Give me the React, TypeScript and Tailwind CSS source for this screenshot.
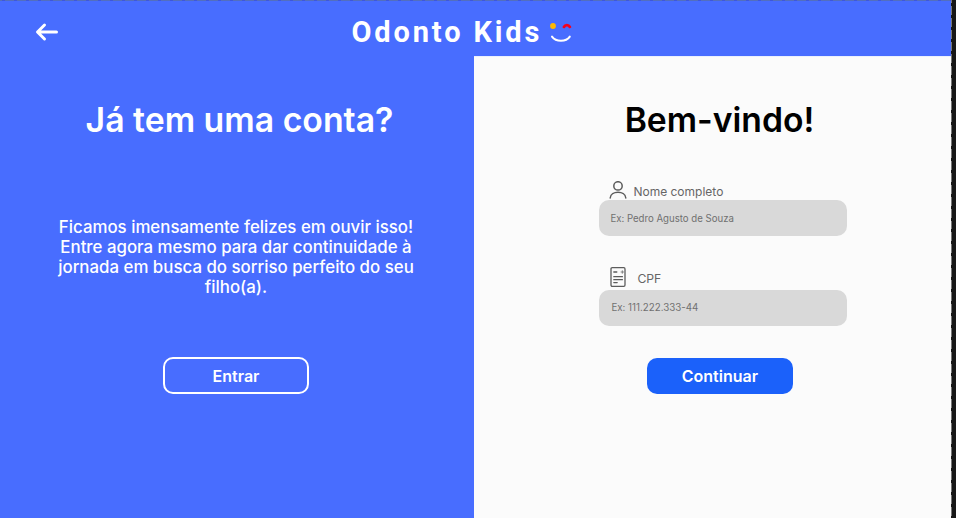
import React from "react";

function BackArrow() {
  return (
    <svg width="24" height="20" viewBox="0 0 24 20" fill="none" stroke="white" strokeWidth="3" strokeLinecap="round" strokeLinejoin="round">
      <path d="M21.5 10H3M9.5 3L2.5 10l7 7" />
    </svg>
  );
}

function WinkLogo() {
  return (
    <svg width="24" height="22" viewBox="0 0 24 22" fill="none">
      <circle cx="4" cy="4" r="2.9" fill="#FFB800" />
      <path d="M15 4.8C16.2 2.5 19.6 2.5 20.8 4.8" stroke="#F5001D" strokeWidth="2.9" strokeLinecap="round" />
      <path d="M3 14.6C7 20.2 17 20.2 20.8 14.6" stroke="white" strokeWidth="2" strokeLinecap="round" />
    </svg>
  );
}

function PersonIcon() {
  return (
    <svg className="mb-px" width="18" height="18" viewBox="0 0 18 18" fill="none" stroke="#5c5c5c" strokeWidth="1.5" strokeLinecap="round">
      <circle cx="9" cy="4.9" r="4.2" />
      <path d="M1.2 17C1.8 9.3 16.2 9.3 16.8 17" />
    </svg>
  );
}

function DocumentIcon() {
  return (
    <svg width="18" height="22" viewBox="0 0 18 22" fill="none" stroke="#5c5c5c" strokeWidth="1.3" strokeLinecap="round">
      <rect x="2" y="1.7" width="14" height="18.6" rx="1.2" />
      <path d="M4.8 6h3M4.8 10.7h8.6M4.8 13.7h8.6M4.8 16.6h3.4" />
      <path d="M12 6h2.6M13.3 4.7v2.6" strokeWidth=".7" />
    </svg>
  );
}

export default function App() {
  return (
    <div className="flex h-[518px] w-[956px] overflow-hidden bg-[#171717] font-['Inter',sans-serif]">
      <div className="flex w-[951px] flex-col">
        <div className="h-px bg-[repeating-linear-gradient(90deg,#536fbd_0px,#536fbd_2px,#3f57d8_2px,#3f57d8_5px,#536fbd_5px,#536fbd_12px)]" />
        <header className="flex h-[55px] items-start bg-[#486DFF]">
          <button className="ml-[35px] mt-[21px]" aria-label="Voltar"><BackArrow /></button>
          <div className="ml-[292.5px] mt-[13px] flex">
            <h1 className="w-[197.5px] whitespace-nowrap font-['Roboto',sans-serif] text-[29px] font-bold leading-[36px] tracking-[2.85px] text-white">Odonto Kids</h1>
            <div className="mt-[8px]"><WinkLogo /></div>
          </div>
        </header>
        <main className="flex flex-1">
          <section className="flex w-[474px] flex-col items-center bg-[#486DFF] text-white">
            <h2 className="ml-[5px] mt-[42px] whitespace-nowrap text-[33.8px] font-semibold leading-[44px]">Já tem uma conta?</h2>
            <p className="mr-[2px] mt-[75px] w-[372px] text-center text-[16.85px] font-medium leading-[20.15px]">
              Ficamos imensamente felizes em ouvir isso!<br />
              Entre agora mesmo para dar continuidade à<br />
              jornada em busca do sorriso perfeito do seu<br />
              filho(a).
            </p>
            <button className="mr-[2px] mt-[59.4px] h-[37px] w-[146px] rounded-[10px] border-2 border-white pt-px text-base font-semibold">Entrar</button>
          </section>
          <section className="flex flex-1 flex-col items-center border-t border-[#eaf0fd] bg-[#FBFBFB]">
            <h2 className="ml-[14px] mt-[41px] whitespace-nowrap text-[33.7px] font-semibold leading-[44px] text-black">Bem-vindo!</h2>
            <form className="ml-[21.8px] mt-[37px] flex w-[248px] flex-col">
              <label className="flex h-[21px] items-end pl-[10px] text-[12px] leading-[17px] text-[#666]">
                <PersonIcon /><span className="ml-[6px]">Nome completo</span>
              </label>
              <div className="flex h-[36px] items-center rounded-[10px] bg-[#D9D9D9] pl-[11px] pt-[2px] text-[9.65px] text-[#707070]">Ex: Pedro Agusto de Souza</div>
              <label className="mt-[30px] flex h-[24px] items-start pl-[10px] text-[12.2px] leading-[16px] text-[#666]">
                <DocumentIcon /><span className="ml-[10px] mt-[4.5px]">CPF</span>
              </label>
              <div className="flex h-[36px] items-center rounded-[10px] bg-[#D9D9D9] pl-[12px] text-[9.75px] text-[#707070]">Ex: 111.222.333-44</div>
              <button type="button" className="ml-[47.5px] mt-[32px] h-[36px] w-[146px] rounded-[10px] bg-[#1B61FA] text-base font-semibold text-white">Continuar</button>
            </form>
          </section>
        </main>
      </div>
      <div className="w-px bg-[repeating-linear-gradient(180deg,#777_0px,#777_3px,#171717_3px,#171717_6px,#777_6px,#777_11.92px)]" />
    </div>
  );
}
